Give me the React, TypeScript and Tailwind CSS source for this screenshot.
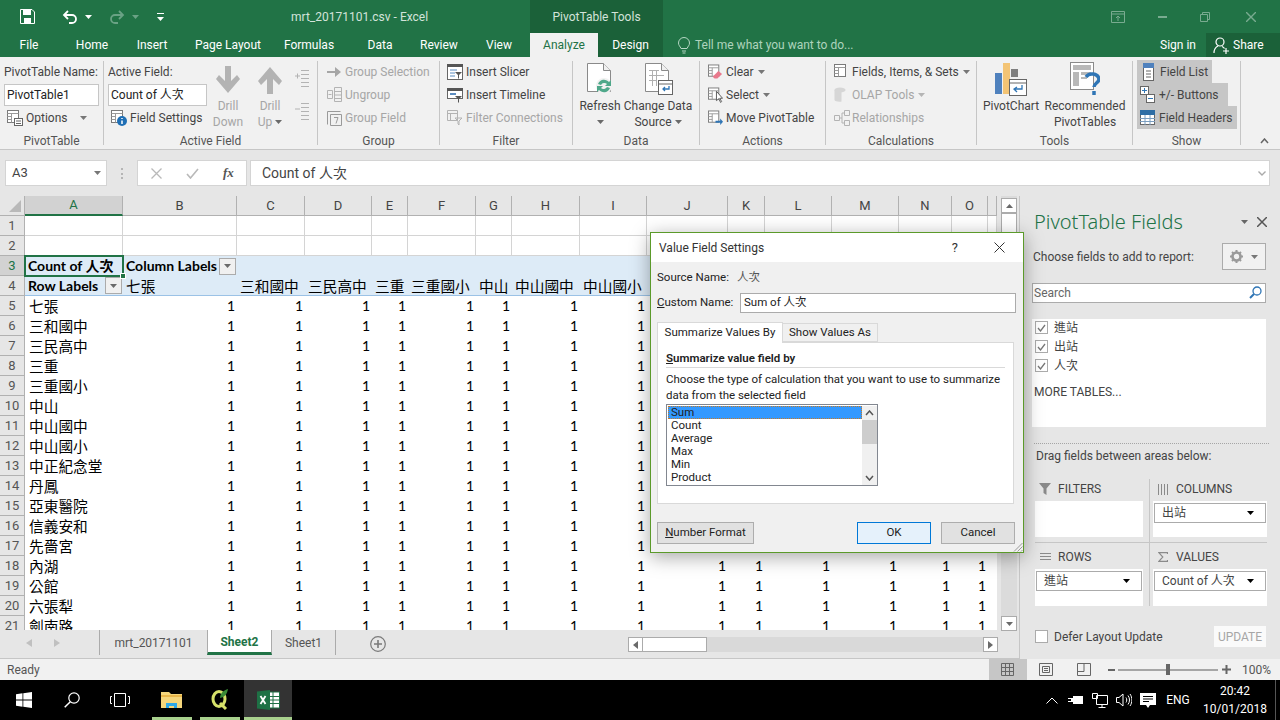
import type { ReactNode } from 'react'

const uiFont = "font-['Roboto','Noto_Sans_CJK_TC',sans-serif]"
const cellFont = "font-['Lato','Noto_Sans_CJK_TC',sans-serif]"

const colLetters = ['A', 'B', 'C', 'D', 'E', 'F', 'G', 'H', 'I', 'J', 'K', 'L', 'M', 'N', 'O', '']
const colHeads = ['三和國中', '三民高中', '三重', '三重國小', '中山', '中山國中', '中山國小']
const stations = ['七張', '三和國中', '三民高中', '三重', '三重國小', '中山', '中山國中', '中山國小', '中正紀念堂', '丹鳳', '亞東醫院', '信義安和', '先嗇宮', '內湖', '公館', '六張犁', '劍南路']
const calcs = ['Count', 'Average', 'Max', 'Min', 'Product']
const tabs: [string, string][] = [
  ['Home', 'w-[68px]'],
  ['Insert', 'w-[52px]'],
  ['Page Layout', 'w-[100px]'],
  ['Formulas', 'w-[62px]'],
  ['Data', 'w-[56px] ml-[12px]'],
  ['Review', 'w-[62px]'],
  ['View', 'w-[58px]'],
]

function Caret({ className = 'text-[#6a6a6a]' }: { className?: string }) {
  return (
    <svg width="7" height="4" viewBox="0 0 7 4" className={`shrink-0 ${className}`}>
      <path d="M0 0h7L3.5 4z" fill="currentColor" />
    </svg>
  )
}

// little sheet-with-lines glyph that most of the ribbon icons start from
function Sheet({ children, w = 16, h = 16 }: { children?: ReactNode; w?: number; h?: number }) {
  return (
    <svg width={w} height={h} viewBox="0 0 16 16" className="shrink-0">
      <rect x="0.5" y="0.5" width="11" height="12" fill="#fff" stroke="#7a7a7a" />
      <path d="M0.5 3.5h11M4.5 3.5v9M0.5 6.5h4M0.5 9.5h4" stroke="#9a9a9a" />
      {children}
    </svg>
  )
}

function Row({ icon, label, off, caret }: { icon?: ReactNode; label: string; off?: boolean; caret?: boolean }) {
  return (
    <div className={`flex h-[23px] items-center gap-[3px] whitespace-nowrap ${off ? 'text-[#a6a6a6]' : 'text-[#444]'}`}>
      {icon}
      <span>{label}</span>
      {caret && <Caret className={`ml-[1px] ${off ? 'text-[#b5b5b5]' : 'text-[#777]'}`} />}
    </div>
  )
}

function Group({ width, label, children }: { width: string; label: string; children: ReactNode }) {
  return (
    <div className={`flex h-full shrink-0 ${width}`}>
      <div className="flex min-w-0 flex-1 flex-col">
        <div className="h-[76px] pt-[3px]">{children}</div>
        <div className="h-[16px] text-center leading-[16px] text-[#555]">{label}</div>
      </div>
      <div className="mt-[4px] h-[84px] w-px bg-[#c6c6c6]" />
    </div>
  )
}

function Big({ icon, lines, width, off, caret }: { icon: ReactNode; lines: string[]; width: string; off?: boolean; caret?: boolean }) {
  return (
    <div className={`flex shrink-0 flex-col items-center ${width} ${off ? 'text-[#a6a6a6]' : 'text-[#444]'}`}>
      <div className="flex h-[38px] items-center">{icon}</div>
      {lines.map((l, i) => (
        <div key={l} className="flex h-[16px] items-center gap-[3px] whitespace-nowrap leading-[16px]">
          {l}
          {caret && i === lines.length - 1 && <Caret />}
        </div>
      ))}
    </div>
  )
}

function DocIcon({ children }: { children?: ReactNode }) {
  return (
    <svg width="34" height="34" viewBox="0 0 34 34">
      <path d="M4.5 1.5h16l7 7v21h-23z" fill="#fff" stroke="#8a8a8a" />
      <path d="M20.5 1.5v7h7" fill="#f0f0f0" stroke="#8a8a8a" />
      {children}
    </svg>
  )
}

function FilterButton() {
  return (
    <span className="flex h-[17px] w-[17px] shrink-0 items-center justify-center border border-[#ababab] bg-[#f0f0f0]">
      <Caret />
    </span>
  )
}

function RibbonTabs() {
  return (
    <div className="flex h-[24px] items-center text-[12px] text-white">
      <div className="w-[58px] text-center">File</div>
      {tabs.map(([t, w]) => (
        <div key={t} className={`${w} text-center`}>{t}</div>
      ))}
      <div className="ml-[2px] flex h-full w-[68px] items-center justify-center bg-[#f1f1f1] text-[#217346]">Analyze</div>
      <div className="flex h-full w-[65px] items-center justify-center bg-[#1b6139]">Design</div>
      <svg width="14" height="17" viewBox="0 0 14 17" className="ml-[14px]" fill="none" stroke="#b5d6c3">
        <path d="M4 11.5C3 9 1.500 8.500 1.500 6a5.500 5.500 0 0 1 11 0c0 2.500-1.500 3-2.500 5.500zM5 14h4M5.500 16h3" />
      </svg>
      <div className="ml-[4px] text-[#aed3bd]">Tell me what you want to do...</div>
      <div className="ml-auto mr-[10px]">Sign in</div>
      <div className="flex h-full w-[74px] items-center gap-[4px] bg-[#1b6139] pl-[7px]">
        <svg width="16" height="17" viewBox="0 0 16 17" fill="none" stroke="#fff" strokeWidth="1.200">
          <circle cx="7" cy="5" r="4" />
          <path d="M1 16c0-4 2-6 4-7M9 9.500c1 .3 2 1 2.500 2M10 14h6M13 11v6" />
        </svg>
        Share
      </div>
    </div>
  )
}

function TitleBar() {
  return (
    <div className="flex h-[33px] items-center text-[12px] text-white">
      <svg width="15" height="15" viewBox="0 0 15 15" className="ml-[20px]">
        <path d="M.5.5h11.500l2.500 2.500v11.500H.5z" fill="none" stroke="#fff" />
        <path d="M3 1h8v5H3zM4 9h7v5H4z" fill="#fff" />
      </svg>
      <svg width="16" height="14" viewBox="0 0 16 14" fill="none" stroke="#fff" strokeWidth="1.800" className="ml-[27px]">
        <path d="M6 1 2 5l4 4M2 5h8a4 4 0 0 1 0 8H7" />
      </svg>
      <Caret className="ml-[7px] text-white" />
      <svg width="16" height="14" viewBox="0 0 16 14" fill="none" stroke="#6aa285" strokeWidth="1.800" className="ml-[17px]">
        <path d="M10 1l4 4-4 4M14 5H6a4 4 0 0 0 0 8h3" />
      </svg>
      <Caret className="ml-[7px] text-[#6aa285]" />
      <svg width="7" height="8" viewBox="0 0 7 8" className="ml-[18px]">
        <path d="M0 0h7v1H0zM0 4h7L3.500 8z" fill="#fff" />
      </svg>
      <div className="ml-[127px] w-[239px] text-[#d3e3da]">mrt_20171101.csv - Excel</div>
      <div className="flex h-full w-[133px] items-center justify-center bg-[#1b6139] text-[#d3e3da]">PivotTable Tools</div>
      <svg width="14" height="12" viewBox="0 0 14 12" fill="none" stroke="#79ab90" className="ml-[448px]">
        <path d="M.5.5h13v11H.5zM.5 3h13M7 10V5M5 7l2-2 2 2" />
      </svg>
      <div className="ml-[33px] h-[2px] w-[9px] bg-[#79ab90]" />
      <svg width="10" height="10" viewBox="0 0 10 10" fill="none" stroke="#79ab90" className="ml-[33px]">
        <path d="M.5 2.500h7v7h-7zM2.500 2.500v-2h7v7h-2" />
      </svg>
      <svg width="10" height="10" viewBox="0 0 10 10" stroke="#79ab90" strokeWidth="1.400" className="ml-[36px]">
        <path d="M0 0l10 10M10 0L0 10" />
      </svg>
    </div>
  )
}

function Ribbon() {
  return (
    <div className="flex h-[93px] border-b border-[#c6c6c6] bg-[#f1f1f1] text-[12px]">
      <Group width="w-[104px]" label="PivotTable">
        <div className="pl-[4px]">
          <Row label="PivotTable Name:" />
          <div className="mt-[1px] flex h-[22px] w-[95px] items-center border border-[#c6c6c6] bg-white pl-[2px] text-[#222]">PivotTable1</div>
          <div className="flex h-[23px] items-center pl-[3px] text-[#444]">
            <Sheet w={16} h={16}>
              <rect x="7.500" y="8.500" width="8" height="7" fill="#fff" stroke="#666" />
              <path d="M9 11h5M9 13.500h5" stroke="#666" />
            </Sheet>
            <span className="ml-[3px]">Options</span>
            <Caret className="ml-[12px] text-[#777]" />
          </div>
        </div>
      </Group>

      <Group width="w-[214px]" label="Active Field">
        <div className="flex pl-[4px]">
          <div className="w-[99px] shrink-0">
            <Row label="Active Field:" />
            <div className="mt-[1px] flex h-[22px] items-center border border-[#c6c6c6] bg-white pl-[2px] text-[#222]">Count of 人次</div>
            <div className="flex h-[23px] items-center pl-[3px] text-[#444]">
              <Sheet>
                <circle cx="11" cy="11" r="5" fill="#1f6fb5" />
                <path d="M11 8v1M11 10.500V14" stroke="#fff" strokeWidth="1.500" />
              </Sheet>
              <span className="ml-[3px]">Field Settings</span>
            </div>
          </div>
          <Big
            width="w-[42px]"
            off
            lines={['Drill', 'Down']}
            icon={
              <svg width="24" height="28" viewBox="0 0 24 28" className="mt-[2px]">
                <path d="M9 0h6v15l6-6 3 4-12 14L0 13l3-4 6 6z" fill="#b3b3b3" />
              </svg>
            }
          />
          <Big
            width="w-[42px]"
            off
            caret
            lines={['Drill', 'Up']}
            icon={
              <svg width="24" height="28" viewBox="0 0 24 28" className="mt-[2px]">
                <path d="M9 28h6V13l6 6 3-4L12 1 0 15l3 4 6-6z" fill="#b3b3b3" />
              </svg>
            }
          />
          <div className="flex w-[22px] flex-col items-center gap-[14px] pt-[9px]">
            <svg width="15" height="19" viewBox="0 0 15 19" stroke="#b3b3b3" fill="none">
              <path d="M6 1.500h8M6 5.500h8M6 9.500h8M6 13.500h8M6 17.500h8M0 7h5M2.500 4.500v5" />
            </svg>
            <svg width="15" height="19" viewBox="0 0 15 19" stroke="#b3b3b3" fill="none">
              <path d="M6 1.500h8M6 5.500h8M6 9.500h8M6 13.500h8M6 17.500h8M0 7h5" />
            </svg>
          </div>
        </div>
      </Group>

      <Group width="w-[122px]" label="Group">
        <div className="pl-[9px]">
          <Row
            off
            label="Group Selection"
            icon={
              <svg width="14" height="10" viewBox="0 0 14 10" className="mr-[1px]">
                <path d="M0 4h8V0l6 5-6 5V6H0z" fill="#a6a6a6" />
              </svg>
            }
          />
          <Row
            off
            label="Ungroup"
            icon={
              <svg width="15" height="15" viewBox="0 0 15 15" fill="none" stroke="#b3b3b3">
                <path d="M.5 3.500h5v8h-5zM7.500.5h7v14h-7zM7.500 4.500h7M7.500 8h7M7.500 11.500h7M1.500 7.500h3" />
              </svg>
            }
          />
          <Row
            off
            label="Group Field"
            icon={
              <svg width="15" height="16" viewBox="0 0 15 16" fill="none" stroke="#9a9a9a">
                <path d="M.5 1.500h13M.5 1.500v13M3.500 4.500h11v11h-11zM7 7.500h4l-2 6" />
              </svg>
            }
          />
        </div>
      </Group>

      <Group width="w-[133px]" label="Filter">
        <div className="pl-[7px]">
          <Row
            label="Insert Slicer"
            icon={
              <svg width="16" height="16" viewBox="0 0 16 16">
                <rect x=".5" y=".5" width="15" height="15" fill="#fff" stroke="#666" />
                <path d="M0 0h16v3H0z" fill="#555" />
                <path d="M3 6h7M3 9h5M3 12h5" stroke="#5b8cc0" />
                <path d="M8 8h7l-3 3v3l-1 1v-4z" fill="#555" />
              </svg>
            }
          />
          <Row
            label="Insert Timeline"
            icon={
              <svg width="16" height="16" viewBox="0 0 16 16">
                <rect x=".5" y="1.500" width="15" height="10" fill="#fff" stroke="#666" />
                <path d="M0 1h16v3H0z" fill="#555" />
                <path d="M3 7h6" stroke="#5b8cc0" strokeWidth="2" />
                <path d="M8 9h7l-3 3v3l-1 1v-4z" fill="#555" />
              </svg>
            }
          />
          <Row
            off
            label="Filter Connections"
            icon={
              <svg width="16" height="16" viewBox="0 0 16 16" fill="none" stroke="#b3b3b3">
                <path d="M.5.5h10v10H.5zM.5 3.500h10M3.500 3.500v7M8 8h7l-3 3v4l-1-1v-3z" />
              </svg>
            }
          />
        </div>
      </Group>

      <Group width="w-[127px]" label="Data">
        <div className="flex pl-[7px]">
          <Big
            width="w-[40px]"
            caret
            lines={['Refresh', '']}
            icon={
              <DocIcon>
                <circle cx="21" cy="24" r="8" fill="#f1f1f1" />
                <path d="M15 22a6.500 6.500 0 0 1 11-2l2-2v6h-6l2-2a4 4 0 0 0-6 1zM27 26a6.500 6.500 0 0 1-11 2l-2 2v-6h6l-2 2a4 4 0 0 0 6-1z" fill="#4fa88a" />
              </DocIcon>
            }
          />
          <Big
            width="w-[76px]"
            caret
            lines={['Change Data', 'Source']}
            icon={
              <DocIcon>
                <path d="M8 8.500h10M8 13.500h15M8 18.500h8M11.500 8v16M15.500 8v16" stroke="#b0b0b0" />
                <rect x="17.500" y="18.500" width="14" height="14" fill="#fff" stroke="#666" />
                <path d="M17.500 22h14" stroke="#666" />
                <path d="M28 24v3h-6M24 25l-2 2 2 2" fill="none" stroke="#2f75b5" strokeWidth="1.300" />
              </DocIcon>
            }
          />
        </div>
      </Group>

      <Group width="w-[126px]" label="Actions">
        <div className="pl-[8px]">
          <Row
            caret
            label="Clear"
            icon={
              <Sheet w={15} h={16}>
                <path d="M5 13l6-6 4 3-5 5H7z" fill="#e8798c" />
              </Sheet>
            }
          />
          <Row
            caret
            label="Select"
            icon={
              <Sheet w={15} h={16}>
                <path d="M9 4v10l2.500-2 2 4 1-1-2-3.500h3z" fill="#fff" stroke="#555" />
              </Sheet>
            }
          />
          <Row
            label="Move PivotTable"
            icon={
              <Sheet w={15} h={16}>
                <path d="M8 11h5V8.500l3 3.500-3 3.500V13H8z" fill="#2f75b5" />
              </Sheet>
            }
          />
        </div>
      </Group>

      <Group width="w-[151px]" label="Calculations">
        <div className="pl-[8px]">
          <div className="flex h-[23px] items-center gap-[2px] whitespace-nowrap text-[#444]">
            <Sheet />
            <span>Fields, Items, &amp; Sets</span>
            <Caret className="ml-[2px] text-[#777]" />
          </div>
          <div className="flex h-[23px] items-center gap-[2px] whitespace-nowrap text-[#a6a6a6]">
            <svg width="16" height="16" viewBox="0 0 16 16" className="shrink-0">
              <ellipse cx="6" cy="3" rx="5.500" ry="2.500" fill="#d6d6d6" />
              <path d="M.5 3v10c0 1.500 5 2 7 1.500V3z" fill="#d6d6d6" />
            </svg>
            <span>OLAP Tools</span>
            <Caret className="ml-[2px] text-[#b5b5b5]" />
          </div>
          <div className="flex h-[23px] items-center gap-[2px] whitespace-nowrap text-[#a6a6a6]">
            <svg width="16" height="16" viewBox="0 0 16 16" fill="none" stroke="#b3b3b3" className="shrink-0">
              <path d="M.5 5.500h5v5h-5zM10.500.5h5v5h-5zM10.500 10.500h5v5h-5zM5.500 8H8M8 3h2.500M8 13h2.500M8 3v10" />
            </svg>
            <span>Relationships</span>
          </div>
        </div>
      </Group>

      <Group width="w-[156px]" label="Tools">
        <div className="flex pl-[1px]">
          <Big
            width="w-[66px]"
            lines={['PivotChart']}
            icon={
              <svg width="32" height="33" viewBox="0 0 32 33">
                <path d="M0 10h7v21H0z" fill="#4f81bd" />
                <path d="M8 0h7v31H8z" fill="#f3c475" />
                <path d="M16 6h7v8h-7z" fill="#7f7f7f" />
                <rect x="14.500" y="16.500" width="17" height="16" fill="#fff" stroke="#666" />
                <path d="M14.500 20h17" stroke="#666" />
                <path d="M27 22v4h-8M22 24l-3 2 3 3" fill="none" stroke="#2f75b5" strokeWidth="1.300" />
              </svg>
            }
          />
          <Big
            width="w-[82px]"
            lines={['Recommended', 'PivotTables']}
            icon={
              <svg width="30" height="34" viewBox="0 0 30 34">
                <rect x=".5" y=".5" width="23" height="27" fill="#fff" stroke="#8a8a8a" />
                <path d="M3 3h18v5H3zM3 10h6v14H3zM11 10h10v3H11zM11 15h6v2h-6z" fill="#b8b8b8" />
                <path d="M16 15a7 6 0 0 1 13 2c0 4-5 4-5 8M24 29v4" fill="none" stroke="#2f75b5" strokeWidth="3.500" />
              </svg>
            }
          />
        </div>
      </Group>

      <Group width="w-[108px]" label="Show">
        <div className="pl-[4px]">
          <div className="flex h-[23px] w-[75px] items-center gap-[5px] whitespace-nowrap bg-[#c6c6c6] pl-[5px] text-[#444]">
            <svg width="11" height="18" viewBox="0 0 11 18" className="mx-[1px] shrink-0">
              <rect x=".5" y=".5" width="10" height="17" fill="#fff" stroke="#666" />
              <path d="M0 0h11v5H0z" fill="#4f81bd" />
              <path d="M3 8h5M3 11h5M3 14h5" stroke="#666" />
            </svg>
            Field List
          </div>
          <div className="flex h-[23px] w-[91px] items-center gap-[3px] whitespace-nowrap bg-[#c6c6c6] pl-[3px] text-[#444]">
            <svg width="15" height="17" viewBox="0 0 15 17" fill="none" className="shrink-0">
              <rect x=".5" y=".5" width="8" height="8" fill="#fff" stroke="#666" />
              <path d="M2 4.500h5M4.500 2v5" stroke="#2f75b5" />
              <rect x="6.500" y="8.500" width="8" height="8" fill="#fff" stroke="#666" />
              <path d="M8 12.500h5" stroke="#2f75b5" />
            </svg>
            <span className="ml-[1px]">+/- Buttons</span>
          </div>
          <div className="flex h-[23px] w-[100px] items-center gap-[4px] whitespace-nowrap bg-[#c6c6c6] pl-[3px] text-[#444]">
            <svg width="15" height="15" viewBox="0 0 15 15" className="shrink-0">
              <rect x=".5" y=".5" width="14" height="14" fill="#fff" stroke="#666" />
              <path d="M0 0h15v5H0z" fill="#2f6ea5" />
              <path d="M0 8.500h15M0 11.500h15M5 5v10M10 5v10" stroke="#7b9ec0" />
            </svg>
            Field Headers
          </div>
        </div>
      </Group>

      <div className="flex flex-1 items-end justify-end pb-[5px] pr-[11px]">
        <svg width="9" height="6" viewBox="0 0 9 6" fill="none" stroke="#666" strokeWidth="1.500">
          <path d="M1 5l3.500-4L8 5" />
        </svg>
      </div>
    </div>
  )
}

function FormulaBar() {
  return (
    <div className="flex h-[36px] items-start bg-[#e6e6e6] pl-[5px] pr-[10px] pt-[10px] text-[#444]">
      <div className="flex h-[26px] w-[102px] items-center justify-between border border-[#d4d4d4] bg-white pl-[6px] pr-[5px] text-[13px]">
        A3
        <Caret className="text-[#777]" />
      </div>
      <div className="ml-[14px] flex h-[11px] w-[2px] translate-y-[8px] flex-col justify-between">
        <span className="h-[2px] bg-[#b5b5b5]" />
        <span className="h-[2px] bg-[#b5b5b5]" />
        <span className="h-[2px] bg-[#b5b5b5]" />
      </div>
      <div className="ml-[14px] flex h-[26px] w-[110px] items-center border border-[#d4d4d4] bg-white pl-[13px]">
        <svg width="11" height="11" viewBox="0 0 11 11" stroke="#b9b9b9" strokeWidth="1.300">
          <path d="M.5.5l10 10M10.500.5l-10 10" />
        </svg>
        <svg width="13" height="11" viewBox="0 0 13 11" fill="none" stroke="#b9b9b9" strokeWidth="1.600" className="ml-[24px]">
          <path d="M1 6l3.500 4L12 1" />
        </svg>
        <span className="ml-[24px] font-['Liberation_Serif',serif] text-[13px] font-bold italic text-[#555]">fx</span>
      </div>
      <div className="ml-[3px] flex h-[26px] flex-1 items-center justify-between border border-[#d4d4d4] bg-white pl-[11px] pr-[3px] text-[14px]">
        Count of 人次
        <svg width="8" height="5" viewBox="0 0 8 5" fill="none" stroke="#aaa" strokeWidth="1.400">
          <path d="M.5.5L4 4 7.500.5" />
        </svg>
      </div>
    </div>
  )
}

function RowNum({ n, active }: { n: number; active?: boolean }) {
  return (
    <div className={`flex items-center justify-center border-b border-r border-[#b1b1b1] text-[13px] ${uiFont} ${active ? 'bg-[#d2d2d2] text-[#217346]' : 'bg-[#e6e6e6] text-[#555]'}`}>
      {n}
    </div>
  )
}

function SheetGrid() {
  const rowClass = 'border-b border-r border-[#d4d4d4]'
  return (
    <div className={`grid h-[434px] w-[997px] shrink-0 grid-cols-[25px_98px_114px_68px_67px_36px_68px_36px_68px_67px_81px_37px_67px_67px_53px_36px_9px] auto-rows-[20px] overflow-hidden bg-white text-[14px] leading-[20px] text-black ${cellFont}`}>
      <div className="flex items-end justify-end border-b border-r border-[#b1b1b1] bg-[#e6e6e6] pb-[3px] pr-[3px]">
        <svg width="12" height="12" viewBox="0 0 12 12">
          <path d="M12 0v12H0z" fill="#b9b9b9" />
        </svg>
      </div>
      {colLetters.map((c, i) => (
        <div
          key={i}
          className={`flex items-center justify-center text-[13px] ${uiFont} ${i === 0 ? 'border-b-2 border-r border-b-[#217346] border-r-[#b1b1b1] bg-[#d2d2d2] text-[#217346]' : 'border-b border-r border-[#b1b1b1] bg-[#e6e6e6] text-[#444]'}`}
        >
          {c}
        </div>
      ))}

      {[1, 2].map((n) => (
        <div key={n} className="contents">
          <RowNum n={n} />
          {colLetters.map((c, i) => (
            <div key={i} className={rowClass} />
          ))}
        </div>
      ))}

      <RowNum n={3} active />
      <div className="relative whitespace-nowrap bg-[#ddebf7] pl-[3px] font-bold outline-2 -outline-offset-1 outline-[#217346]">
        Count of 人次
        <span className="absolute -bottom-[3px] -right-[3px] h-[6px] w-[6px] border border-white bg-[#217346]" />
      </div>
      <div className="flex items-center justify-between bg-[#ddebf7] pl-[3px] pr-[1px] font-bold whitespace-nowrap">
        Column Labels
        <FilterButton />
      </div>
      <div className="col-span-14 bg-[#ddebf7]" />

      <RowNum n={4} />
      <div className="flex items-center justify-between border-b border-[#9bc2e6] bg-[#ddebf7] pl-[3px] pr-[1px] font-bold whitespace-nowrap">
        Row Labels
        <FilterButton />
      </div>
      <div className="border-b border-[#9bc2e6] bg-[#ddebf7] pl-[3px] text-[14.700px]">七張</div>
      {colHeads.map((c) => (
        <div key={c} className="whitespace-nowrap border-b border-[#9bc2e6] bg-[#ddebf7] pl-[3px] text-[14.700px]">{c}</div>
      ))}
      <div className="col-span-7 border-b border-[#9bc2e6] bg-[#ddebf7]" />

      {stations.map((s, r) => (
        <div key={s} className="contents">
          <RowNum n={r + 5} />
          <div className="whitespace-nowrap pl-[4px] text-[14.700px]">{s}</div>
          {colLetters.slice(1, 15).map((c, i) => (
            // columns J-O of rows 5-17 sit under the dialog
            <div key={c} className="pr-[2px] text-right">{i >= 8 && r < 13 ? '' : '1'}</div>
          ))}
          <div />
        </div>
      ))}
    </div>
  )
}

function VScroll() {
  return (
    <div className="ml-[4px] flex h-[434px] w-[16px] flex-col bg-[#dbdbdb]">
      <div className="mt-[2px] flex h-[15px] items-center justify-center border border-[#ababab] bg-white">
        <svg width="7" height="4" viewBox="0 0 7 4"><path d="M0 4h7L3.500 0z" fill="#6a6a6a" /></svg>
      </div>
      <div className="h-[60px] border border-[#ababab] bg-white" />
      <div className="mb-[-1px] mt-auto flex h-[15px] items-center justify-center border border-[#ababab] bg-white">
        <Caret />
      </div>
    </div>
  )
}

function SheetTabs() {
  return (
    <div className={`flex h-[29px] items-start border-b border-[#c6c6c6] bg-[#e6e6e6] text-[12px] text-[#444] ${uiFont}`}>
      <div className="flex h-[25px] w-[100px] items-center border-r border-[#ababab] pl-[26px]">
        <svg width="6" height="8" viewBox="0 0 6 8" className="mr-[22px]"><path d="M6 0v8L0 4z" fill="#c0c0c0" /></svg>
        <svg width="6" height="8" viewBox="0 0 6 8"><path d="M0 0v8l6-4z" fill="#c0c0c0" /></svg>
      </div>
      <div className="flex h-[25px] w-[107px] items-center justify-center pt-[1px] text-[#555]">mrt_20171101</div>
      <div className="flex h-[25px] w-[65px] items-center justify-center border-x border-t-0 border-b-[3px] border-x-[#ababab] border-b-[#217346] bg-white pt-[1px] font-bold text-[#217346]">Sheet2</div>
      <div className="flex h-[25px] w-[64px] items-center justify-center border-r border-[#ababab] pt-[1px] text-[#555]">Sheet1</div>
      <svg width="16" height="16" viewBox="0 0 16 16" fill="none" stroke="#7a7a7a" strokeWidth="1.200" className="ml-[34px] mt-[6px]">
        <circle cx="8" cy="8" r="7.300" />
        <path d="M8 4v8M4 8h8" strokeWidth="1.600" />
      </svg>
      <div className="ml-[242px] mt-[7px] flex h-[15px] w-[370px] bg-[#d9d9d9]">
        <div className="flex w-[15px] items-center justify-center border border-[#ababab] bg-white">
          <svg width="5" height="8" viewBox="0 0 5 8"><path d="M5 0v8L0 4z" fill="#6a6a6a" /></svg>
        </div>
        <div className="w-[64px] border-y border-r border-[#ababab] bg-white" />
        <div className="ml-auto flex w-[15px] items-center justify-center border border-[#ababab] bg-white">
          <svg width="5" height="8" viewBox="0 0 5 8"><path d="M0 0v8l5-4z" fill="#6a6a6a" /></svg>
        </div>
      </div>
    </div>
  )
}

function Check() {
  return (
    <span className="flex h-[13px] w-[13px] shrink-0 items-center justify-center border border-[#ababab] bg-white">
      <svg width="9" height="8" viewBox="0 0 9 8" fill="none" stroke="#777" strokeWidth="1.300">
        <path d="M1 4l2.500 3L8 1" />
      </svg>
    </span>
  )
}

function FieldSelect({ label, width }: { label: string; width: string }) {
  return (
    <div className={`mt-[2px] flex h-[20px] items-center justify-between border border-[#ababab] bg-white pl-[7px] pr-[11px] text-[#444] ${width}`}>
      {label}
      <Caret className="text-black" />
    </div>
  )
}

function AreaHead({ icon, label }: { icon: ReactNode; label: string }) {
  return (
    <div className="mb-[2px] flex h-[20px] items-center gap-[7px] pl-[4px] text-[#444]">
      <span className="flex w-[12px] justify-center">{icon}</span>
      {label}
    </div>
  )
}

function FieldPane() {
  return (
    <div className={`flex-1 bg-[#e6e6e6] text-[12px] text-[#444] ${uiFont}`}>
      <div className="mt-[13px] flex h-[26px] items-center pl-[14px] pr-[13px]">
        <span className="font-['Noto_Sans',sans-serif] text-[20px] font-light leading-[26px] text-[#217346]">PivotTable Fields</span>
        <Caret className="ml-auto text-[#666]" />
        <svg width="10" height="10" viewBox="0 0 10 10" stroke="#555" strokeWidth="1.500" className="ml-[9px] mb-[1px]">
          <path d="M0 0l10 10M10 0L0 10" />
        </svg>
      </div>
      <div className="mt-[8px] flex h-[27px] items-center justify-between pl-[13px] pr-[14px]">
        Choose fields to add to report:
        <div className="flex h-[27px] w-[44px] items-center justify-center gap-[8px] border border-[#ababab] bg-[#f1f1f1]">
          <svg width="13" height="13" viewBox="0 0 13 13">
            <circle cx="6.500" cy="6.500" r="4" fill="none" stroke="#9a9a9a" strokeWidth="2.600" />
            <path d="M6.500 0v13M0 6.500h13M2 2l9 9M11 2l-9 9" stroke="#9a9a9a" strokeWidth="2" strokeDasharray="2 9" />
          </svg>
          <Caret className="text-[#777]" />
        </div>
      </div>
      <div className="ml-[12px] mr-[14px] mt-[13px] flex h-[20px] items-center justify-between border border-[#ababab] bg-white pb-[1px] pl-[1px] pr-[3px] text-[#666]">
        Search
        <svg width="13" height="13" viewBox="0 0 13 13" fill="none" stroke="#2f75b5">
          <circle cx="8" cy="5" r="4" strokeWidth="1.300" />
          <path d="M5 8l-4 4" strokeWidth="2" />
        </svg>
      </div>
      <div className="ml-[12px] mr-[14px] mt-[16px] h-[108px] bg-white">
        {['進站', '出站', '人次'].map((f) => (
          <div key={f} className="flex h-[19px] items-center gap-[6px] pb-[2px] pl-[3px]">
            <Check />
            {f}
          </div>
        ))}
        <div className="ml-[2px] mt-[7px] h-[18px] leading-[18px]">MORE TABLES...</div>
      </div>
      <div className="ml-[14px] mr-[11px] mt-[16px] border-t border-dotted border-[#a6a6a6]" />
      <div className="mt-[4px] h-[16px] pl-[16px] leading-[16px]">Drag fields between areas below:</div>
      <div className="ml-[15px] mt-[15px] grid w-[232px] grid-cols-[115px_117px]">
        <div className="border-b border-r border-[#c6c6c6] pb-[5px] pr-[6px]">
          <AreaHead
            label="FILTERS"
            icon={
              <svg width="12" height="12" viewBox="0 0 12 12"><path d="M0 0h12L7.500 5.500V12l-3-2V5.500z" fill="#8a8a8a" /></svg>
            }
          />
          <div className="h-[36px] bg-white" />
        </div>
        <div className="border-b border-[#c6c6c6] pb-[5px] pl-[3px]">
          <AreaHead
            label="COLUMNS"
            icon={
              <svg width="10" height="11" viewBox="0 0 10 11" stroke="#8a8a8a"><path d="M.5 0v11M3.500 0v11M6.500 0v11M9.500 0v11" /></svg>
            }
          />
          <div className="flow-root h-[36px] bg-white pl-[1px]">
            <FieldSelect label="出站" width="w-[112px]" />
          </div>
        </div>
        <div className="border-r border-[#c6c6c6] pr-[6px] pt-[4px]">
          <AreaHead
            label="ROWS"
            icon={
              <svg width="11" height="9" viewBox="0 0 11 9" stroke="#8a8a8a"><path d="M0 .5h11M0 3.500h11M0 6.500h11" /></svg>
            }
          />
          <div className="flow-root h-[37px] bg-white pl-[1px]">
            <FieldSelect label="進站" width="w-[106px]" />
          </div>
        </div>
        <div className="pl-[3px] pt-[4px]">
          <AreaHead
            label="VALUES"
            icon={
              <svg width="10" height="10" viewBox="0 0 10 10" fill="none" stroke="#8a8a8a" strokeWidth="1.200"><path d="M9.500 2V.6H.8l4 4.400-4 4.400h8.700V8" /></svg>
            }
          />
          <div className="flow-root h-[37px] bg-white pl-[1px]">
            <FieldSelect label="Count of 人次" width="w-[112px]" />
          </div>
        </div>
      </div>
      <div className="mt-[20px] flex h-[21px] items-center pl-[15px] pr-[14px]">
        <span className="h-[13px] w-[13px] border border-[#ababab] bg-white" />
        <span className="ml-[6px]">Defer Layout Update</span>
        <span className="ml-auto flex h-[21px] w-[52px] items-center justify-center bg-[#fafafa] text-[#a6a6a6]">UPDATE</span>
      </div>
    </div>
  )
}

function ValueFieldDialog() {
  return (
    <div className={`absolute left-[650px] top-[232px] flex h-[321px] w-[374px] flex-col border border-[#5b9a2a] bg-[#f0f0f0] text-[11.500px] text-[#222] shadow-[0_4px_18px_rgba(0,0,0,0.35)] ${uiFont}`}>
      <div className="flex h-[29px] shrink-0 items-center bg-white pl-[8px] text-[12px] text-[#333]">
        Value Field Settings
        <span className="ml-auto text-[13px]">?</span>
        <svg width="11" height="11" viewBox="0 0 11 11" stroke="#333" className="ml-[36px] mr-[18px]">
          <path d="M.5.5l10 10M10.500.5l-10 10" />
        </svg>
      </div>
      <div className="flex h-[31px] items-center pl-[6px] pt-[1px]">
        <span className="w-[80px]">Source Name:</span>
        <span className="text-[#555]">人次</span>
      </div>
      <div className="flex items-center pl-[6px]">
        <span className="w-[83px]"><u>C</u>ustom Name:</span>
        <div className="flex h-[20px] w-[276px] items-center border border-[#ababab] bg-white pl-[3px]">Sum of 人次</div>
      </div>
      <div className="ml-[6px] mt-[9px] flex h-[20px] items-end">
        <div className="z-10 -mb-px flex h-[21px] w-[126px] items-center justify-center border border-b-0 border-[#d9d9d9] bg-white">Summarize Values By</div>
        <div className="flex h-[19px] w-[95px] items-center justify-center border-y border-r border-[#d9d9d9] bg-[#f0f0f0]">Show Values As</div>
      </div>
      <div className="ml-[6px] h-[162px] w-[357px] border border-[#d9d9d9] bg-white px-[8px] pt-[8px]">
        <div className="border-b border-[#d9d9d9] pb-[1px] font-semibold leading-[15px]"><u>S</u>ummarize value field by</div>
        <div className="mt-[3px] leading-[16px]">Choose the type of calculation that you want to use to summarize data from the selected field</div>
        <div className="mt-[1px] flex h-[82px] w-[212px] border border-[#828790] bg-white pl-[1px] pt-[1px] leading-[13px]">
          <div className="flex-1">
            <div className="h-[13px] border border-dotted border-[#c47a27] bg-[#3399ff] pl-[2px] leading-[11px] text-[#222]">Sum</div>
            {calcs.map((c) => (
              <div key={c} className="h-[13px] pl-[3px]">{c}</div>
            ))}
          </div>
          <div className="flex w-[15px] flex-col items-center bg-[#f0f0f0]">
            <svg width="9" height="6" viewBox="0 0 9 6" fill="none" stroke="#555" strokeWidth="1.500" className="mt-[4px]"><path d="M1 5l3.500-4L8 5" /></svg>
            <div className="mt-[4px] h-[24px] w-full bg-[#cdcdcd]" />
            <svg width="9" height="6" viewBox="0 0 9 6" fill="none" stroke="#555" strokeWidth="1.500" className="mb-[4px] mt-auto"><path d="M1 1l3.500 4L8 1" /></svg>
          </div>
        </div>
      </div>
      <div className="ml-[6px] mr-[8px] mt-[18px] flex">
        <div className="flex h-[22px] w-[97px] items-center justify-center border border-[#adadad] bg-[#e1e1e1]"><span><u>N</u>umber Format</span></div>
        <div className="ml-auto flex h-[22px] w-[74px] items-center justify-center border border-[#0078d7] bg-[#e5f1fb]">OK</div>
        <div className="ml-[10px] flex h-[22px] w-[74px] items-center justify-center border border-[#adadad] bg-[#e1e1e1]">Cancel</div>
      </div>
      <svg width="10" height="10" viewBox="0 0 10 10" stroke="#9a9a9a" className="absolute bottom-0 right-0">
        <path d="M9.500 1L1 9.500M9.500 4.500l-5 5M9.500 8l-1.500 1.500" />
      </svg>
    </div>
  )
}

function StatusBar() {
  return (
    <div className={`flex h-[21px] items-center bg-[#f1f1f1] text-[12px] text-[#555] ${uiFont}`}>
      <span className="pl-[7px]">Ready</span>
      <div className="ml-auto flex h-full w-[38px] items-center justify-center bg-[#c6c6c6]">
        <svg width="13" height="13" viewBox="0 0 13 13" stroke="#666" fill="none">
          <path d="M.5.5h12v12H.5zM4.500.5v12M8.500.5v12M.5 4.500h12M.5 8.500h12" />
        </svg>
      </div>
      <div className="flex w-[38px] justify-center">
        <svg width="14" height="13" viewBox="0 0 14 13" stroke="#666" fill="none">
          <path d="M.5.5h13v12H.5zM3.500 3.500h7v6h-7zM5 5.500h4M5 7.500h4" />
        </svg>
      </div>
      <div className="flex w-[38px] justify-center">
        <svg width="14" height="13" viewBox="0 0 14 13" stroke="#666" fill="none">
          <path d="M.5 12.500V.5h13v12zM.5 8.500h6.500V.5" />
        </svg>
      </div>
      <div className="ml-[5px] h-[2px] w-[7px] bg-[#666]" />
      <div className="ml-[3px] flex h-[2px] w-[100px] justify-center bg-[#a6a6a6]">
        <span className="-mt-[5px] h-[11px] w-[4px] bg-[#666]" />
      </div>
      <svg width="9" height="9" viewBox="0 0 9 9" stroke="#666" strokeWidth="2" className="ml-[4px]">
        <path d="M0 4.500h9M4.500 0v9" />
      </svg>
      <span className="ml-[11px] mr-[9px] text-[#555]">100%</span>
    </div>
  )
}

function Taskbar() {
  return (
    <div className={`flex h-[40px] items-stretch bg-black text-[12px] text-white ${uiFont}`}>
      <div className="flex w-[48px] items-center justify-center">
        <svg width="16" height="16" viewBox="0 0 16 16" fill="#fff">
          <path d="M0 2.200l6.500-.9v6.300H0zM7.300 1.200L16 0v7.600H7.300zM0 8.400h6.500v6.300L0 13.800zM7.300 8.400H16V16l-8.700-1.200z" />
        </svg>
      </div>
      <div className="flex w-[48px] items-center justify-center">
        <svg width="16" height="16" viewBox="0 0 16 16" fill="none" stroke="#fff" strokeWidth="1.200">
          <circle cx="10" cy="6" r="5.200" />
          <path d="M6.300 9.700L.7 15.300" strokeWidth="1.500" />
        </svg>
      </div>
      <div className="flex w-[48px] items-center justify-center">
        <svg width="20" height="14" viewBox="0 0 20 14" fill="none" stroke="#fff">
          <path d="M4.500.5h11v13h-11zM2 3.500H.5v7H2M18 3.500h1.500v7H18" />
        </svg>
      </div>
      <div className="flex w-[51px] flex-col items-center pt-[11px] pl-[4px]">
        <svg width="21" height="17" viewBox="0 0 21 17">
          <path d="M0 1h8l2 2h11v14H0z" fill="#f5d67c" />
          <path d="M0 4h21v2H0z" fill="#e8b64a" />
          <path d="M5 17v-5h11v5h-3v-2H8v2z" fill="#2ea8e8" />
        </svg>
        <div className="mt-auto h-[3px] w-[40px] bg-[#a8d08d]" />
      </div>
      <div className="flex w-[49px] flex-col items-center pt-[9px]">
        <svg width="18" height="21" viewBox="0 0 18 21" fill="none">
          <ellipse cx="8" cy="10" rx="6" ry="7.500" stroke="#d7e26a" strokeWidth="3" />
          <path d="M9 14l6 6" stroke="#d7e26a" strokeWidth="3" />
          <path d="M9 9c0-5 4-8 8-9-1 5-3 8-8 9z" fill="#3a8a35" />
        </svg>
        <div className="mt-auto h-[3px] w-[40px] bg-[#a8d08d]" />
      </div>
      <div className="flex w-[48px] flex-col items-center bg-[#333] pt-[10px]">
        <svg width="23" height="20" viewBox="0 0 23 20">
          <path d="M10 2h12.500v16H10z" fill="#fff" stroke="#1e7145" />
          <path d="M11 6.500h11M11 10h11M11 13.500h11M16 2v16" stroke="#1e7145" />
          <path d="M0 1.500l13-1.500v20L0 18.500z" fill="#1e7145" />
          <path d="M3.500 6l5 8M8.500 6l-5 8" stroke="#fff" strokeWidth="1.800" />
        </svg>
        <div className="mt-auto h-[3px] w-full bg-[#a8d08d]" />
      </div>

      <div className="ml-auto flex w-[24px] items-center justify-center">
        <svg width="12" height="7" viewBox="0 0 12 7" fill="none" stroke="#fff"><path d="M.5 6.500L6 1l5.500 5.500" /></svg>
      </div>
      <div className="flex w-[24px] items-center justify-center">
        <svg width="16" height="10" viewBox="0 0 16 10" fill="#fff"><path d="M5 1h10v8H5zM3 3h2v4H3zM0 3h3v1H0zM0 6h3v1H0z" /></svg>
      </div>
      <div className="flex w-[24px] items-center justify-center">
        <svg width="16" height="15" viewBox="0 0 16 15" fill="none" stroke="#fff"><path d="M4.500 2.500h11v9h-11zM.5.5h5v5h-5zM10 11.500v3M6.500 14.500h7" /></svg>
      </div>
      <div className="flex w-[24px] items-center justify-center">
        <svg width="16" height="14" viewBox="0 0 16 14" fill="none" stroke="#fff"><path d="M.5 4.500h2.500L7 1v12L3 9.500H.5zM10 4.500c1 1.500 1 3.500 0 5M12 2.500c2 2.500 2 6.500 0 9M14 1c2.500 3.500 2.500 8.500 0 12" /></svg>
      </div>
      <div className="flex w-[24px] items-center justify-center">
        <svg width="16" height="15" viewBox="0 0 16 15"><path d="M0 0h16v12H10l-2 3-2-3H0z" fill="#fff" /><path d="M3 3.500h10M3 6h10M3 8.500h6" stroke="#000" /></svg>
      </div>
      <div className="flex w-[36px] items-center justify-center">ENG</div>
      <div className="ml-[9px] flex w-[60px] flex-col items-center justify-center leading-[18px]">
        <span>20:42</span>
        <span>10/01/2018</span>
      </div>
      <div className="ml-[10px] mr-[4px] w-px bg-[#555]" />
    </div>
  )
}

export default function App() {
  return (
    <div className={`relative flex h-[720px] w-[1280px] flex-col overflow-hidden bg-[#e6e6e6] ${uiFont}`}>
      <div className="bg-[#217346]">
        <TitleBar />
        <RibbonTabs />
      </div>
      <Ribbon />
      <FormulaBar />
      <div className="flex h-[473px] pt-[10px]">
        <div className="w-[1020px] shrink-0 border-r border-[#c6c6c6]">
          <div className="flex h-[434px]">
            <SheetGrid />
            <VScroll />
          </div>
          <SheetTabs />
        </div>
        <FieldPane />
      </div>
      <StatusBar />
      <Taskbar />
      <ValueFieldDialog />
    </div>
  )
}
